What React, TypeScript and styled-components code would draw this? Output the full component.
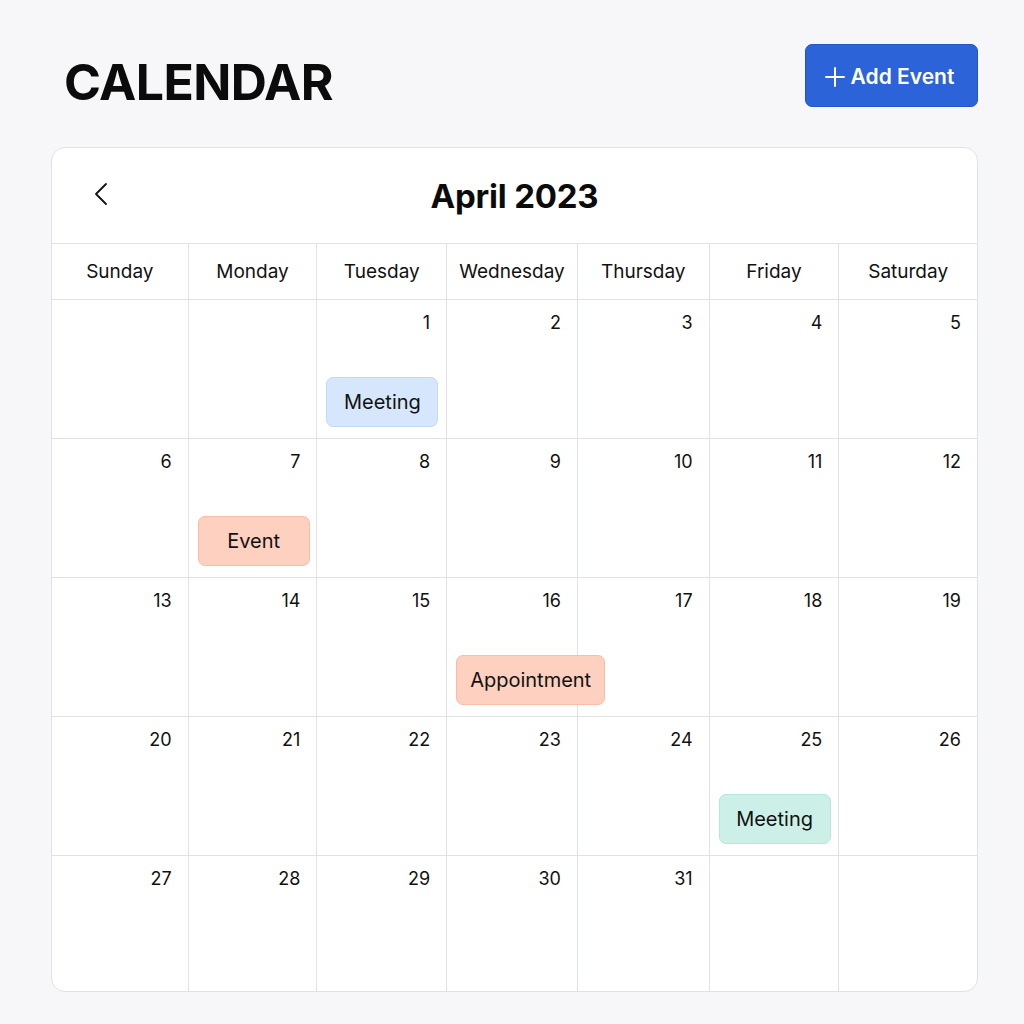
import React from "react";
import styled, { createGlobalStyle } from "styled-components";

const GlobalStyle = createGlobalStyle`
  html, body { margin: 0; padding: 0; background: #f7f7f9; }
  body { font-family: Inter, "Noto Sans", "Liberation Sans", sans-serif; color: #111; }
  * { box-sizing: border-box; }
`;

const Page = styled.div`
  width: 1024px;
  min-height: 1024px;
  padding: 44px 46px 32px 51px;
`;

const TopBar = styled.div`
  display: flex;
  align-items: center;
  justify-content: space-between;
  height: 63px;
  margin-bottom: 40px;
`;

const Title = styled.h1`
  margin: 0 0 0 13px;
  font-size: 50px;
  font-weight: 700;
  letter-spacing: -0.6px;
  color: #0b0b0c;
  line-height: 1;
  padding-top: 12px;
`;

const AddButton = styled.button`
  display: flex;
  align-items: center;
  gap: 6px;
  height: 63px;
  width: 173px;
  justify-content: center;
  border: 1px solid #2356c4;
  border-radius: 7px;
  background: #2d63d8;
  color: #fff;
  font-family: inherit;
  font-size: 21px;
  font-weight: 600;
  padding: 2px 18px 0 14px;
`;

const Card = styled.div`
  background: #fff;
  border: 1px solid #e1e2e7;
  border-radius: 14px;
  overflow: hidden;
`;

const CardHeader = styled.div`
  display: grid;
  grid-template-columns: 1fr auto 1fr;
  align-items: center;
  height: 96px;
  padding: 0 42px;
  border-bottom: 1px solid #e1e2e7;
`;

const NavButton = styled.button`
  justify-self: start;
  background: none;
  border: none;
  padding: 0;
  display: flex;
  color: #111;
  margin-top: -4px;
`;

const MonthTitle = styled.h2`
  margin: 0;
  font-size: 33px;
  font-weight: 700;
  color: #0b0b0c;
  letter-spacing: -0.2px;
`;

const Grid = styled.div`
  display: grid;
  grid-template-columns:
    minmax(0, 137fr) minmax(0, 129fr) minmax(0, 130fr) minmax(0, 131fr)
    minmax(0, 132fr) minmax(0, 130fr) minmax(0, 138fr);
  grid-template-rows: 56px repeat(4, 139px) 135px;
`;

const WeekdayCell = styled.div<{ $last: boolean }>`
  display: flex;
  align-items: center;
  justify-content: center;
  font-size: 19px;
  color: #111;
  border-bottom: 1px solid #e1e2e7;
  border-right: ${(p) => (p.$last ? "none" : "1px solid #e1e2e7")};
`;

const DayCell = styled.div<{ $lastCol: boolean; $lastRow: boolean }>`
  position: relative;
  display: flex;
  flex-direction: column;
  align-items: flex-start;
  padding: 12px 16px 0 9px;
  border-right: ${(p) => (p.$lastCol ? "none" : "1px solid #e1e2e7")};
  border-bottom: ${(p) => (p.$lastRow ? "none" : "1px solid #e1e2e7")};
`;

const DayNumber = styled.span`
  align-self: flex-end;
  font-size: 18px;
  line-height: 22px;
  color: #111;
  height: 22px;
`;

const Chip = styled.div<{ $bg: string; $border: string }>`
  margin-top: 43px;
  height: 50px;
  min-width: 112px;
  padding: 0 13px;
  display: flex;
  align-items: center;
  justify-content: center;
  white-space: nowrap;
  font-size: 20px;
  color: #111;
  background: ${(p) => p.$bg};
  border: 1px solid ${(p) => p.$border};
  border-radius: 7px;
  position: relative;
  z-index: 1;
`;

const weekdays = ["Sunday", "Monday", "Tuesday", "Wednesday", "Thursday", "Friday", "Saturday"];

const chipColors = {
  blue: { bg: "#d6e6fc", border: "#c3daf7" },
  salmon: { bg: "#fdd0bf", border: "#f9bca7" },
  mint: { bg: "#ccf0e7", border: "#b5e7da" },
};

const events: Record<number, { label: string; color: keyof typeof chipColors }> = {
  1: { label: "Meeting", color: "blue" },
  7: { label: "Event", color: "salmon" },
  16: { label: "Appointment", color: "salmon" },
  25: { label: "Meeting", color: "mint" },
};

const ChevronLeft = () => (
  <svg width="16" height="24" viewBox="0 0 16 24" fill="none">
    <path d="M12 2 L2 12 L12 22" stroke="#111" strokeWidth="1.8" strokeLinecap="round" strokeLinejoin="round" />
  </svg>
);

const PlusIcon = () => (
  <svg width="20" height="20" viewBox="0 0 20 20" fill="none">
    <path d="M10 1 V19 M1 10 H19" stroke="#fff" strokeWidth="2" strokeLinecap="round" />
  </svg>
);

export default function App() {
  const cells: (number | null)[] = [];
  for (let i = 0; i < 2; i++) cells.push(null);
  for (let d = 1; d <= 31; d++) cells.push(d);
  while (cells.length < 35) cells.push(null);

  return (
    <>
      <GlobalStyle />
      <Page>
        <TopBar>
          <Title>CALENDAR</Title>
          <AddButton>
            <PlusIcon />
            Add Event
          </AddButton>
        </TopBar>
        <Card>
          <CardHeader>
            <NavButton aria-label="Previous month">
              <ChevronLeft />
            </NavButton>
            <MonthTitle>April 2023</MonthTitle>
            <span />
          </CardHeader>
          <Grid>
            {weekdays.map((w, i) => (
              <WeekdayCell key={w} $last={i === 6}>
                {w}
              </WeekdayCell>
            ))}
            {cells.map((d, i) => {
              const ev = d ? events[d] : undefined;
              return (
                <DayCell key={i} $lastCol={i % 7 === 6} $lastRow={i >= 28}>
                  <DayNumber>{d ?? ""}</DayNumber>
                  {ev && (
                    <Chip $bg={chipColors[ev.color].bg} $border={chipColors[ev.color].border}>
                      {ev.label}
                    </Chip>
                  )}
                </DayCell>
              );
            })}
          </Grid>
        </Card>
      </Page>
    </>
  );
}
